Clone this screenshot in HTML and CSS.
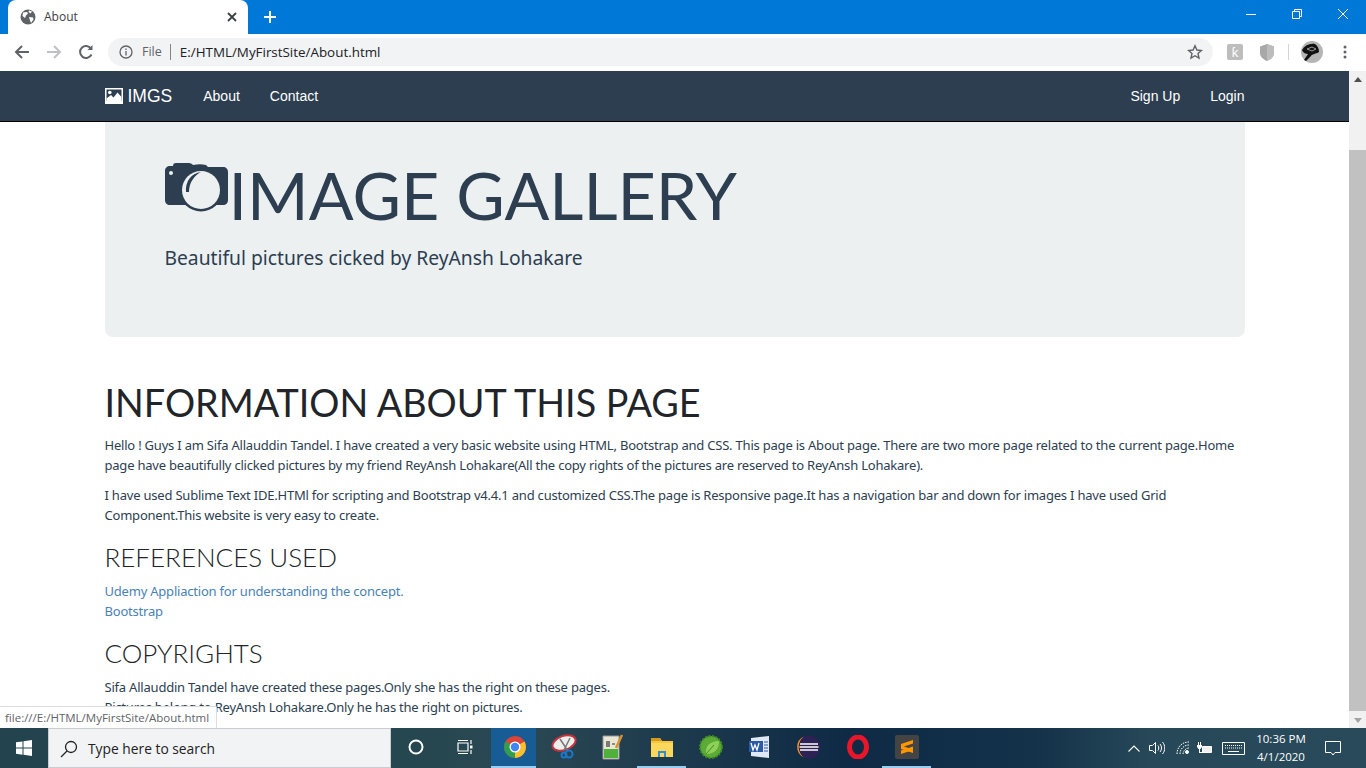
FILE: index.html
```html
<!DOCTYPE html>
<html lang="en">
<head>
    <meta charset="UTF-8">
    <meta name="viewport" content="width=device-width, initial-scale=1.0">
    <title>About</title>
    <link rel="stylesheet" href="styles.css">
</head>
<body>
    <!-- Pestañas de la ventana -->
    <div class="tabstrip">
        <div class="tab">
            <svg class="tab-globe" width="16" height="16" viewBox="0 0 16 16"><circle cx="8" cy="8" r="7.5" fill="#5f6368"/><path d="M3 3.500 7 3l1 1.500-2 2-1 2.500-2.500-2zM9 1.500l3 1-1.500 2-2-1.500zM9 8l4 .5.5 2L11 14l-1-2.500z" fill="#fff"/></svg>
            <span class="tab-title">About</span>
            <svg class="tab-close" width="10" height="10" viewBox="0 0 10 10"><path d="M1 1l8 8M9 1l-8 8" stroke="#3c4043" stroke-width="1.800"/></svg>
        </div>
        <svg class="tab-new" width="12" height="12" viewBox="0 0 12 12"><path d="M6 0v12M0 6h12" stroke="#fff" stroke-width="2"/></svg>
        <div class="window-controls">
            <svg width="10" height="10" viewBox="0 0 10 10"><path d="M0 5.500h10" stroke="#fff"/></svg>
            <svg width="10" height="10" viewBox="0 0 10 10" fill="none" stroke="#fff"><path d="M.5 2.500h7v7h-7zM2.500 2.500v-2h7v7h-2"/></svg>
            <svg width="10" height="10" viewBox="0 0 10 10"><path d="M0 0l10 10M10 0L0 10" stroke="#fff"/></svg>
        </div>
    </div>

    <!-- Barra de direcciones -->
    <div class="toolbar">
        <svg class="tool" width="16" height="16" viewBox="0 0 16 16" fill="none" stroke="#5f6368" stroke-width="2"><path d="M15 8H2M8 2 2 8l6 6"/></svg>
        <svg class="tool" width="16" height="16" viewBox="0 0 16 16" fill="none" stroke="#bdc1c6" stroke-width="2"><path d="M1 8h13M8 2l6 6-6 6"/></svg>
        <svg class="tool" width="16" height="16" viewBox="0 0 16 16" fill="none" stroke="#5f6368" stroke-width="2"><path d="M13.500 10.500A6 6 0 1 1 13 4.500"/><path d="M14.500 1v5h-5z" fill="#5f6368" stroke="none"/></svg>
        <div class="omnibox">
            <svg width="14" height="14" viewBox="0 0 14 14" fill="none" stroke="#5f6368" stroke-width="1.300"><circle cx="7" cy="7" r="6"/><path d="M7 6v4.500M7 3.500v1.500"/></svg>
            <span class="omni-file">File</span>
            <span class="omni-url">E:/HTML/MyFirstSite/About.html</span>
            <svg class="omni-star" width="16" height="16" viewBox="0 0 16 16" fill="none" stroke="#5f6368" stroke-width="1.400"><path d="M8 1.800l1.900 4.200 4.500.5-3.400 3 1 4.500L8 11.700 4 14l1-4.500-3.400-3 4.500-.5z"/></svg>
        </div>
        <div class="ext-icons">
            <span class="ext-k">ƙ</span>
            <svg width="14" height="17" viewBox="0 0 14 17"><path d="M7 0l7 2.500V9c0 4-3.500 6.500-7 8-3.500-1.500-7-4-7-8V2.500z" fill="#a8a8a8"/><path d="M7 0l7 2.500V9c0 4-3.500 6.500-7 8z" fill="#bcbcbc"/></svg>
            <span class="ext-divider"></span>
            <svg width="22" height="22" viewBox="0 0 22 22"><circle cx="11" cy="11" r="11" fill="#b5b5b5"/><path d="M1 9c3-5 8-7 13-6 3 2 4 5 4 8-3 2-7 2-8 4l-5 5-2-1 4-6C5 13 2 12 1 9z" fill="#111"/><path d="M6 8l5-2 4 2-4 2z" fill="none" stroke="#999"/></svg>
            <svg class="ext-menu" width="4" height="14" viewBox="0 0 4 14" fill="#5f6368"><circle cx="2" cy="2" r="1.500"/><circle cx="2" cy="7" r="1.500"/><circle cx="2" cy="12" r="1.500"/></svg>
        </div>
    </div>

    <div class="viewport">
        <div class="page">
            <nav class="navbar">
                <div class="nav-inner">
                    <a class="brand" href="#">
                        <svg width="18" height="16" viewBox="0 0 18 16"><path fill="#fff" fill-rule="evenodd" d="M0 0h18v16H0zM1.500 1.500v11.500h15V1.500z"/><path fill="#fff" d="M1.500 13v-2.500L6 7l2.500 2.500L12.500 4.500l4 4.500v4z"/><circle cx="4.800" cy="4.500" r="1.800" fill="#fff"/></svg>
                        IMGS
                    </a>
                    <a class="nav-link" href="#">About</a>
                    <a class="nav-link" href="#">Contact</a>
                    <a class="nav-link nav-push" href="#">Sign Up</a>
                    <a class="nav-link nav-last" href="#">Login</a>
                </div>
            </nav>

            <main class="container">
                <section class="jumbotron">
                    <h1>
                        <svg class="camera" width="65" height="50" viewBox="0 0 65 50">
                            <path fill="#2c3e50" d="M0 8c0-3 2-5 5-5h3V3c0-2 1-3 3-3h13c2 0 3 1 4 2 5-1 9-1 13 0l2 2h15c3 0 5 2 5 5v28c0 3-2 5-5 5H50L36 48 22 42H5c-3 0-5-2-5-5z"/>
                            <circle cx="36" cy="27" r="21.500" fill="#2c3e50"/>
                            <circle cx="36" cy="27" r="19" fill="#ecf0f1"/>
                            <path fill="#2c3e50" d="M21 29c-1-11 6-19 15-20-6 3-12 10-12 20z"/>
                            <circle cx="6" cy="10" r="2" fill="#ecf0f1"/>
                        </svg><span class="display">IMAGE GALLERY</span>
                    </h1>
                    <p class="lead">Beautiful pictures cicked by ReyAnsh Lohakare</p>
                </section>

                <h2 class="title">INFORMATION ABOUT THIS PAGE</h2>
                <p>Hello ! Guys I am Sifa Allauddin Tandel. I have created a very basic website using HTML, Bootstrap and CSS. This page is About page. There are two more page related to the current page.Home page have beautifully clicked pictures by my friend ReyAnsh Lohakare(All the copy rights of the pictures are reserved to ReyAnsh Lohakare).</p>
                <p>I have used Sublime Text IDE.HTMl for scripting and Bootstrap v4.4.1 and customized CSS.The page is Responsive page.It has a navigation bar and down for images I have used Grid Component.This website is very easy to create.</p>

                <h3>REFERENCES USED</h3>
                <p><a href="#">Udemy Appliaction for understanding the concept.</a><br><a href="#">Bootstrap</a></p>

                <h3>COPYRIGHTS</h3>
                <p>Sifa Allauddin Tandel have created these pages.Only she has the right on these pages.<br>Pictures belong to ReyAnsh Lohakare.Only he has the right on pictures.</p>
            </main>

            <div class="status-bubble">file:///E:/HTML/MyFirstSite/About.html</div>
        </div>

        <div class="scrollbar">
            <span class="arrow-up"></span>
            <div class="scroll-thumb"></div>
            <span class="arrow-down"></span>
        </div>
    </div>

    <!-- Barra de tareas -->
    <footer class="taskbar">
        <div class="start">
            <svg width="16" height="16" viewBox="0 0 16 16" fill="#fff"><path d="M0 2.300 6.500 1.400v6.200H0zM7.500 1.300 16 0v7.600H7.500zM0 8.500h6.500v6.200L0 13.700zM7.500 8.500H16V16l-8.500-1.200z"/></svg>
        </div>
        <div class="search">
            <svg width="18" height="18" viewBox="0 0 18 18" fill="none" stroke="#222" stroke-width="1.300"><circle cx="11" cy="7" r="5.500"/><path d="M7 11 1 17"/></svg>
            <span>Type here to search</span>
        </div>
        <div class="task-apps">
            <div class="app"><svg width="16" height="16" viewBox="0 0 16 16" fill="none" stroke="#fff" stroke-width="2"><circle cx="8" cy="8" r="6.500"/></svg></div>
            <div class="app"><svg width="16" height="16" viewBox="0 0 16 16" fill="none" stroke="#fff" stroke-width="1.200"><path d="M1 4h10v8H1zM1 1.500h10M1 14.500h10M14 1v4M14 11v4"/><path d="M13 6.500h2.500v3H13z" fill="#fff" stroke="none"/></svg></div>
            <div class="app app-active">
                <svg width="24" height="24" viewBox="0 0 24 24"><circle cx="12" cy="12" r="11" fill="#db4437"/><path d="M12 12 21.500 6.500A11 11 0 0 1 12 23z" fill="#fbc02d"/><path d="M12 12 12 23A11 11 0 0 1 2.500 6.500z" fill="#2e9e4f"/><circle cx="12" cy="12" r="5.500" fill="#fff"/><circle cx="12" cy="12" r="4.200" fill="#4285f4"/></svg>
            </div>
            <div class="app">
                <svg width="26" height="26" viewBox="0 0 26 26"><ellipse cx="13" cy="9" rx="12" ry="7" transform="rotate(-20 13 9)" fill="#eee" stroke="#c4343c" stroke-width="2"/><path d="M9 5l8 12M19 4l-6 12" stroke="#777" stroke-width="1.500"/><circle cx="18" cy="20" r="3.500" fill="none" stroke="#1b78c8" stroke-width="2"/><circle cx="13" cy="21" r="2.500" fill="none" stroke="#1b78c8" stroke-width="2"/></svg>
            </div>
            <div class="app">
                <svg width="22" height="26" viewBox="0 0 22 26"><path d="M1 2h16v23H1z" fill="#e9e6d6" stroke="#999"/><path d="M2 15h14v9H2z" fill="#4fb03a"/><path d="M5 7v6M7 7v6M10 10h3" stroke="#333" stroke-width="1.200"/><path d="M20 1 14 14" stroke="#d9902f" stroke-width="2.500"/></svg>
            </div>
            <div class="app app-open">
                <svg width="22" height="20" viewBox="0 0 22 20"><path d="M0 1h9l2 3H22v16H0z" fill="#f6c63e"/><path d="M0 1h9l2 3H0z" fill="#d49a1f"/><path d="M0 6h22v14H0z" fill="#fbd75b"/><path d="M7 14h8v6H7z" fill="#2d8fd5"/><path d="M9 16h4v4H9z" fill="#fbd75b"/></svg>
            </div>
            <div class="app">
                <svg width="24" height="24" viewBox="0 0 24 24"><circle cx="12" cy="12" r="11" fill="#5bab36" stroke="#3f8a25" stroke-dasharray="2 1.500" stroke-width="2"/><path d="M7 19C6 11 11 6 20 6c0 8-4 13-13 13z" fill="#8fd05a"/><path d="M7 19 15 10" stroke="#3f8a25"/></svg>
            </div>
            <div class="app">
                <svg width="24" height="24" viewBox="0 0 24 24"><path d="M3 3l18-2v22L3 21z" fill="#dfe8f6"/><path d="M1 6h14v11H1z" fill="#2a5aa8"/><path d="M3 8l2 7 2-5 2 5 2-7" fill="none" stroke="#fff" stroke-width="1.300"/><path d="M16 7h4M16 10h4M16 13h4M16 16h4" stroke="#2a5aa8"/></svg>
            </div>
            <div class="app">
                <svg width="24" height="24" viewBox="0 0 24 24"><circle cx="12" cy="12" r="11.500" fill="#2c2255"/><path d="M7 1.500a11.500 11.500 0 0 0 0 21A13 13 0 0 1 7 1.500z" fill="#f7941e"/><path d="M3 9h18M2.500 12h19M3 15h18" stroke="#fff" stroke-width="1.300"/></svg>
            </div>
            <div class="app">
                <svg width="22" height="24" viewBox="0 0 22 24" fill="none"><ellipse cx="11" cy="12" rx="8.500" ry="10" stroke="#e8162b" stroke-width="5"/></svg>
            </div>
            <div class="app app-open">
                <div class="sublime"><svg width="14" height="16" viewBox="0 0 14 16" fill="#ff9800"><path d="M1 5 13 1v3.500L1 8.500zM1 6.500l12 4v3.500l-12 -4zM1 11.500 13 7.500V11L1 15z"/></svg></div>
            </div>
        </div>
        <div class="tray">
            <svg width="12" height="7" viewBox="0 0 12 7" fill="none" stroke="#fff" stroke-width="1.100"><path d="M.5 6.500 6 1l5.500 5.500"/></svg>
            <svg width="16" height="14" viewBox="0 0 16 14" fill="none" stroke="#fff"><path d="M.5 4.500h3l3-3v11l-3-3h-3zM9 4.500c1 1.500 1 3.500 0 5M11 3c2 2.500 2 5.500 0 8M13.500 1c3 3.500 3 8.500 0 12"/></svg>
            <svg class="tray-wifi" width="14" height="14" viewBox="0 0 14 14" fill="none" stroke="#fff"><path d="M1 13C1 6 6 1 13 1M4 13c0-5 4-9 9-9M7 13c0-3 3-6 6-6" stroke-dasharray="1.500 1"/><circle cx="11" cy="11" r="1.500" fill="#fff"/></svg>
            <svg width="16" height="12" viewBox="0 0 16 12"><path d="M5.500 4.500h9v6h-9z" fill="#f0f0f0" stroke="#fff"/><path d="M1.500 0v3M3.500 0v3" stroke="#fff"/><path d="M0 3h5v2L3.500 7h-2L0 5zM2 7h1v3h3v1H2z" fill="#fff"/></svg>
            <svg width="23" height="13" viewBox="0 0 23 13" fill="none" stroke="#fff"><path d="M.5.500h22v12H.5z"/><path d="M3 3.500h17M3 6h17" stroke-dasharray="1 1"/><path d="M6 9.500h11"/></svg>
            <div class="clock"><span>10:36 PM</span><span>4/1/2020</span></div>
            <svg class="tray-note" width="16" height="15" viewBox="0 0 16 15" fill="none" stroke="#fff"><path d="M.5.500h15v11H10l-2 2.500-2-2.500H.5z"/></svg>
        </div>
    </footer>
</body>
</html>
```

FILE: styles.css
```css
* {
    box-sizing: border-box;
}
html, body {
    height: 100%;
}
body {
    margin: 0;
    display: flex;
    flex-direction: column;
    overflow: hidden;
    font-family: "Noto Sans", sans-serif;
    font-size: 13px;
    line-height: 20px;
    letter-spacing: -0.21px;
    color: #2c3e50;
    background: #fff;
}
svg {
    flex-shrink: 0;
    display: block;
}

/* Pestañas */
.tabstrip {
    height: 34px;
    flex-shrink: 0;
    display: flex;
    align-items: center;
    padding-left: 8px;
    background: #0078d7;
    letter-spacing: 0;
}
.tab {
    width: 240px;
    height: 34px;
    display: flex;
    align-items: center;
    padding: 0 11px 0 12px;
    background: #fff;
    border-radius: 8px 8px 0 0;
    font-family: "Open Sans", sans-serif;
    font-size: 12px;
    color: #3c4043;
}
.tab-title {
    margin-left: 8px;
    flex-grow: 1;
}
.tab-new {
    margin-left: 16px;
}
.window-controls {
    margin-left: auto;
    align-self: flex-start;
    display: flex;
    align-items: center;
    gap: 36px;
    padding: 9px 18px 0 0;
}

/* Barra de direcciones */
.toolbar {
    height: 37px;
    flex-shrink: 0;
    display: flex;
    align-items: center;
    padding: 0 0 1px 14px;
    background: #fff;
    letter-spacing: 0;
}
.tool {
    margin-right: 16px;
}
.omnibox {
    width: 1105px;
    height: 28px;
    margin-left: -2px;
    display: flex;
    align-items: center;
    padding: 0 10px 0 11px;
    background: #f1f3f4;
    border-radius: 14px;
    font-family: "Open Sans", sans-serif;
    font-size: 13.400px;
}
.omni-file {
    margin-left: 9px;
    padding-right: 8px;
    border-right: 1px solid #80868b;
    line-height: 16px;
    color: #5f6368;
    font-size: 12.500px;
}
.omni-url {
    margin-left: 9px;
    flex-grow: 1;
    color: #202124;
}
.ext-icons {
    display: flex;
    align-items: center;
    margin-left: 14px;
}
.ext-k {
    width: 16px;
    height: 16px;
    border-radius: 2px;
    background: #bdbdbd;
    color: #fff;
    font-size: 13px;
    line-height: 16px;
    text-align: center;
    margin-right: 17px;
}
.ext-divider {
    width: 1px;
    height: 16px;
    margin: 0 12px 0 14px;
    background: #d5d5d5;
}
.ext-menu {
    margin-left: 20px;
}

/* Contenido */
.viewport {
    flex: 1;
    min-height: 0;
    display: flex;
}
.page {
    position: relative;
    flex: 1;
    min-width: 0;
    overflow: hidden;
}
.navbar {
    height: 51px;
    background: #2c3e50;
    border-bottom: 1px solid #000;
}
.nav-inner {
    width: 1140px;
    height: 100%;
    margin: 0 auto;
    display: flex;
    align-items: center;
    font-family: "Liberation Sans", Arial, sans-serif;
    font-size: 14px;
    letter-spacing: 0;
}
.nav-inner a {
    color: #fff;
    text-decoration: none;
}
.brand {
    display: flex;
    align-items: center;
    gap: 5px;
    margin-right: 16px;
    font-size: 17.500px;
}
.nav-link {
    padding: 0 15px;
}
.nav-push {
    margin-left: auto;
}
.nav-last {
    padding-right: 0;
}
.container {
    width: 1140px;
    margin: 0 auto;
}
.jumbotron {
    height: 215px;
    padding: 40px 60px 0;
    background: #ecf0f1;
    border-radius: 0 0 8px 8px;
}
.jumbotron h1 {
    margin: 0;
    display: flex;
    align-items: center;
    height: 62px;
    font-weight: 400;
}
.camera {
    align-self: flex-start;
    margin-top: 1px;
}
.display {
    margin-left: -1px;
    padding-top: 2px;
    font-family: Lato, sans-serif;
    font-size: 66.400px;
    line-height: 62px;
    letter-spacing: 0;
}
.lead {
    margin: 21px 0 0;
    font-size: 19.250px;
    line-height: 26px;
    letter-spacing: 0;
}
.title {
    margin: 44px 0 0;
    font-family: Lato, sans-serif;
    font-weight: 400;
    font-size: 37.700px;
    line-height: 44px;
    letter-spacing: 0;
    color: #212529;
}
p {
    margin: 0 0 10px;
}
.title + p {
    margin-top: 10px;
}
h3 {
    margin: 16px 0 8px;
    font-family: Lato, sans-serif;
    font-weight: 300;
    font-size: 26px;
    line-height: 32px;
    letter-spacing: 0;
    color: #212529;
}
a {
    color: #4a82b4;
    text-decoration: none;
}
.status-bubble {
    position: absolute;
    left: 0;
    bottom: 0;
    height: 22px;
    padding: 0 7px 0 5px;
    background: #fff;
    border: 1px solid #dadce0;
    border-left: 0;
    border-bottom: 0;
    border-top-right-radius: 2px;
    font-family: "Open Sans", sans-serif;
    font-size: 11.500px;
    line-height: 21px;
    letter-spacing: 0;
    color: #5f6368;
}

/* Barra de scroll */
.scrollbar {
    width: 17px;
    flex-shrink: 0;
    display: flex;
    flex-direction: column;
    align-items: center;
    background: #f1f1f1;
}
.scroll-thumb {
    width: 100%;
    flex: 1;
    margin: 91px 0 5px;
    background: #c1c1c1;
}
.arrow-up, .arrow-down {
    width: 0;
    height: 0;
    margin-top: 6px;
    border: 4px solid transparent;
    border-top: 0;
    border-bottom: 5px solid #505050;
}
.arrow-up {
    margin-bottom: -23px;
}
.arrow-down {
    margin: 2px 0 5px;
    border: 4px solid transparent;
    border-bottom: 0;
    border-top: 5px solid #a3a3a3;
}

/* Barra de tareas */
.taskbar {
    height: 40px;
    flex-shrink: 0;
    display: flex;
    align-items: stretch;
    background: linear-gradient(90deg, #23444f 0, #25474f 30%, #2b4854 38%, #0e2a45 62%, #14324a 76%, #264858 84%, #284a5a 100%);
    color: #fff;
    letter-spacing: 0;
}
.start {
    width: 48px;
    display: flex;
    align-items: center;
    justify-content: center;
}
.search {
    width: 343px;
    display: flex;
    align-items: center;
    gap: 10px;
    padding: 1px 0 0 11px;
    background: #f2f3f5;
    border: 1px solid #c9ccd0;
    font-family: "Open Sans", sans-serif;
    font-size: 13.800px;
    color: #222;
}
.task-apps {
    display: flex;
}
.app {
    width: 49px;
    display: flex;
    align-items: center;
    justify-content: center;
    border-bottom: 2px solid transparent;
}
.app-active {
    width: 45px;
    margin: 0 3px 0 2px;
    padding-left: 3px;
    background: #175c94;
    border-bottom-color: #99cdf0;
}
.app-open {
    border-bottom-color: #99cdf0;
}
.sublime {
    width: 24px;
    height: 24px;
    display: flex;
    align-items: center;
    justify-content: center;
    border-radius: 2px;
    background: #444;
}
.tray {
    margin-left: auto;
    display: flex;
    align-items: center;
    gap: 9px;
    padding-right: 25px;
}
.tray-wifi {
    margin: 0 -2px 0 2px;
}
.clock {
    width: 66px;
    margin-left: -6px;
    display: flex;
    flex-direction: column;
    align-items: center;
    font-family: "Open Sans", sans-serif;
    font-size: 11.500px;
    line-height: 18px;
}
.tray-note {
    margin-left: 2px;
}
```
